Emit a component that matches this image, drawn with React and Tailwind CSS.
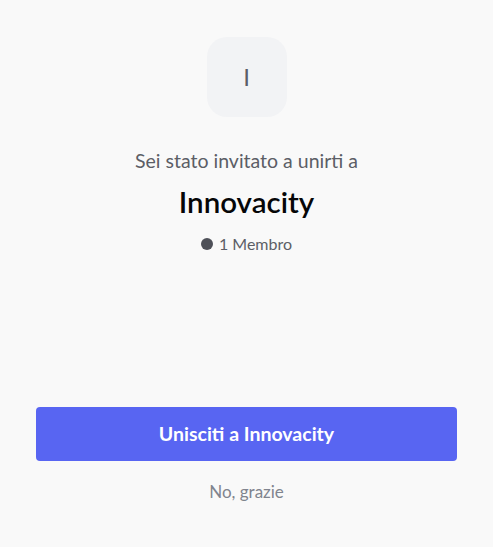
export default function App() {
  return (
    <div
      className="w-[493px] h-[547px] bg-[#f9f9f9] flex flex-col items-center px-[36px] pt-[37px]"
      style={{ fontFamily: 'Lato, "Noto Sans", sans-serif' }}
    >
      <div className="w-[80px] h-[80px] rounded-[20px] bg-[#f2f3f5] flex items-center justify-center text-[24px] leading-none text-[#5c5e66]">
        I
      </div>
      <div className="mt-[32px] text-[19.5px] leading-[24px] text-[#5c5e66] whitespace-nowrap">
        Sei stato invitato a unirti a
      </div>
      <div className="mt-[11px] text-[29.5px] leading-[36px] font-semibold text-[#060607]">
        Innovacity
      </div>
      <div className="mt-[14px] flex items-center gap-[6px] text-[16px] leading-[20px] text-[#5c5e66]">
        <span className="w-[12px] h-[12px] rounded-full bg-[#4e5058]" />
        <span>1 Membro</span>
      </div>
      <button className="mt-[153px] w-full h-[54px] rounded-[4px] bg-[#5865f2] text-white text-[19.5px] font-bold">
        Unisciti a Innovacity
      </button>
      <div className="mt-[20px] text-[17px] leading-[22px] text-[#80848e]">
        No, grazie
      </div>
    </div>
  );
}
